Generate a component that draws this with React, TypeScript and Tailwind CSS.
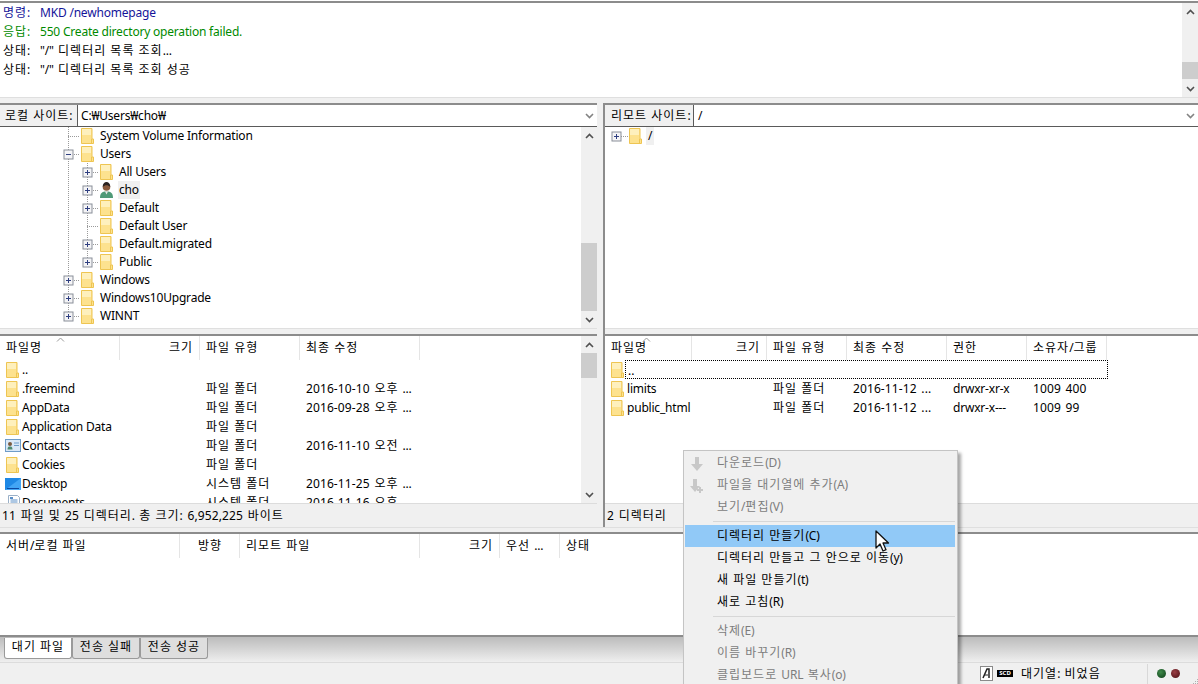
import React from "react";

/* Korean runs are set wider than Latin runs, as in the Windows original. */
const runClass = (part: string, whole: string) => {
  if (/[가-힣]/.test(part)) return "tracking-[1px]";
  if (/^[\d\s.,:-]+$/.test(part) && /\d/.test(part)) return "tracking-[0.1px] [word-spacing:1.5px]";
  if (/[가-힣]/.test(whole)) return "tracking-[-0.2px] [word-spacing:1.5px]";
  return "tracking-[-0.2px]";
};

const T = ({ children }: { children: string }) => (
  <>
    {children.split(/([가-힣][가-힣 ]*)/).map((part, i) =>
      part === "" ? null : (
        <span key={i} className={runClass(part, children)}>
          {part}
        </span>
      )
    )}
  </>
);

const Folder = ({ className = "" }: { className?: string }) => (
  <svg width="13" height="16" viewBox="0 0 13 16" className={"shrink-0 " + className}>
    <path d="M.5.5h10.500v10.500h1.500v4.500H.5z" fill="#fde28f" stroke="#eec552" />
    <rect x="1" y="1" width="9" height="6" fill="#fef0bd" />
    <path d="M10.500 11v4" stroke="#eec552" />
  </svg>
);

const Person = () => (
  <svg width="13" height="16" viewBox="0 0 13 16" className="shrink-0">
    <path d="M0 16c0-5 2-6.500 6.500-6.500S13 11 13 16z" fill="#4f9a78" />
    <circle cx="6.500" cy="5" r="3.800" fill="#8a5a3c" />
    <path d="M2.700 5c0-3.500 1.800-5 3.800-5s3.800 1.500 3.800 5C8 2.800 5 2.800 2.700 5z" fill="#2b2320" />
    <path d="M5 9.500l1.500 3 1.500-3z" fill="#e8e8e8" />
  </svg>
);

const Contacts = () => (
  <svg width="16" height="13" viewBox="0 0 16 13" className="shrink-0">
    <rect x=".5" y=".5" width="15" height="12" fill="#d9e8f7" stroke="#6f9cc8" />
    <circle cx="5" cy="5" r="2" fill="#7a5a40" />
    <path d="M2.500 10.500c0-2.500 1-3 2.500-3s2.500.5 2.500 3z" fill="#4f8a70" />
    <path d="M9 4h5M9 6.500h5" stroke="#6f9cc8" />
  </svg>
);

const Desktop = () => (
  <svg width="16" height="12" viewBox="0 0 16 12" className="shrink-0">
    <rect width="16" height="12" fill="#1e88e5" />
    <path d="M0 12L16 0v12z" fill="#42a5f5" />
    <path d="M2 10.500h12" stroke="#0d47a1" />
  </svg>
);

const Documents = () => (
  <svg width="14" height="16" viewBox="0 0 14 16" className="shrink-0">
    <path d="M2.500.5h9l2 2v13h-11z" fill="#fff" stroke="#9ab0c8" />
    <path d="M4.500 5h7M4.500 7h7M4.500 9h7" stroke="#5b8fc7" />
    <rect x="4" y="2" width="3" height="2" fill="#5b8fc7" />
  </svg>
);

const Chevron = ({ up = false, className = "" }: { up?: boolean; className?: string }) => (
  <svg width="9" height="6" viewBox="0 0 9 6" className={className}>
    <path d={up ? "M1 5l3.500-3.500L8 5" : "M1 1l3.500 3.500L8 1"} fill="none" stroke="#505050" strokeWidth="1.600" />
  </svg>
);

const Scrollbar = ({ top, size }: { top: number; size: number }) => (
  <div className="w-[16px] shrink-0 bg-[#f0f0f0] flex flex-col h-full">
    <div className="h-[17px] shrink-0 flex items-center justify-center">
      <Chevron up />
    </div>
    <div className="flex-1 min-h-0 relative">
      <div className="absolute left-0 right-0 bg-[#cdcdcd]" style={{ top, height: size }} />
    </div>
    <div className="h-[17px] shrink-0 flex items-center justify-center">
      <Chevron />
    </div>
  </div>
);

const Box = ({ x, minus = false }: { x: number; minus?: boolean }) => (
  <g>
    <rect x={x - 4} y="5" width="9" height="9" fill="#f4f4f6" stroke="#8a8f99" />
    <path d={`M${x - 2} 9.500h5`} stroke="#2f3f80" />
    {!minus && <path d={`M${x + 0.5} 7v5`} stroke="#2f3f80" />}
  </g>
);

type TreeRow = {
  name: string;
  depth: 1 | 2;
  box?: boolean;
  minus?: boolean;
  last1?: boolean;
  last2?: boolean;
  person?: boolean;
  selected?: boolean;
};

const treeRows: TreeRow[] = [
  { name: "System Volume Information", depth: 1 },
  { name: "Users", depth: 1, box: true, minus: true },
  { name: "All Users", depth: 2, box: true },
  { name: "cho", depth: 2, box: true, person: true, selected: true },
  { name: "Default", depth: 2, box: true },
  { name: "Default User", depth: 2 },
  { name: "Default.migrated", depth: 2, box: true },
  { name: "Public", depth: 2, box: true, last2: true },
  { name: "Windows", depth: 1, box: true },
  { name: "Windows10Upgrade", depth: 1, box: true },
  { name: "WINNT", depth: 1, box: true, last1: true },
];

const dots = { stroke: "#9a9a9a", strokeDasharray: "1 1" };

const TreeLine = ({ r }: { r: TreeRow }) => {
  const w = r.depth === 1 ? 81 : 100;
  const bx = r.depth === 1 ? 68 : 87;
  return (
    <svg width={w} height="18" viewBox={`0 0 ${w} 18`} className="shrink-0">
      <path d={`M68.500 0V${r.last1 ? 9 : 18}`} {...dots} />
      {r.depth === 2 && <path d={`M87.500 0V${r.last2 ? 9 : 18}`} {...dots} />}
      <path d={`M${bx} 9.500H${bx + 11}`} {...dots} />
      {r.box && <Box x={bx} minus={r.minus} />}
    </svg>
  );
};

const Tree = () => (
  <div className="flex-1 min-w-0 overflow-hidden">
    {treeRows.map((r) => (
      <div key={r.name} className="h-[18px] flex items-center">
        <TreeLine r={r} />
        {r.person ? <Person /> : <Folder />}
        <span className={"ml-[5px] px-[1px] h-[18px] leading-[17px] " + (r.selected ? "bg-[#f0f0f0]" : "")}>
          <T>{r.name}</T>
        </span>
      </div>
    ))}
  </div>
);

const Bar = () => <div className="h-[2px] shrink-0 bg-[#8c8c8c]" />;

const PathBar = ({ label, value, labelW, valueP }: { label: string; value: string; labelW: string; valueP: string }) => (
  <div className="h-[22px] shrink-0 flex bg-white border-b border-[#5a5a5a]">
    <div className={"h-full bg-[#f0f0f0] border-r border-[#5a5a5a] leading-[21px] shrink-0 " + labelW}>
      <T>{label}</T>
    </div>
    <div className={"flex-1 leading-[21px] " + valueP}>
      <T>{value}</T>
    </div>
    <div className="w-[16px] flex items-center justify-center">
      <Chevron className="opacity-70" />
    </div>
  </div>
);

const Band = () => <div className="h-[6px] shrink-0 bg-[#f0f0f0] border-t border-[#dfdfdf]" />;

const Header = ({ cols }: { cols: { t: string; w: string; right?: boolean }[] }) => (
  <div className="h-[24px] shrink-0 flex bg-white">
    {cols.map((c) => (
      <div
        key={c.t}
        className={"h-[24px] border-r border-[#e5e5e5] leading-[23px] shrink-0 px-[6px] " + c.w + (c.right ? " text-right" : "")}
      >
        <T>{c.t}</T>
      </div>
    ))}
  </div>
);

const SortMark = ({ className }: { className: string }) => (
  <svg width="9" height="5" viewBox="0 0 9 5" className={"absolute top-[1px] " + className}>
    <path d="M1 4.500l3.500-3.500L8 4.500" fill="none" stroke="#9a9a9a" />
  </svg>
);

const leftFiles: { n: string; t?: string; d?: string; icon?: React.ReactNode }[] = [
  { n: ".." },
  { n: ".freemind", t: "파일 폴더", d: "2016-10-10 오후 ..." },
  { n: "AppData", t: "파일 폴더", d: "2016-09-28 오후 ..." },
  { n: "Application Data", t: "파일 폴더" },
  { n: "Contacts", t: "파일 폴더", d: "2016-11-10 오전 ...", icon: <Contacts /> },
  { n: "Cookies", t: "파일 폴더" },
  { n: "Desktop", t: "시스템 폴더", d: "2016-11-25 오후 ...", icon: <Desktop /> },
  { n: "Documents", t: "시스템 폴더", d: "2016-11-16 오후 ...", icon: <Documents /> },
];

const rightFiles = [
  { n: "limits", t: "파일 폴더", d: "2016-11-12 ...", p: "drwxr-xr-x", o: "1009 400" },
  { n: "public_html", t: "파일 폴더", d: "2016-11-12 ...", p: "drwxr-x---", o: "1009 99" },
];

const MenuItem = ({ t, disabled, active }: { t: string; disabled?: boolean; active?: boolean }) => (
  <div
    className={
      "h-[22px] shrink-0 pl-[32px] leading-[21px] " +
      (disabled ? "text-[#7d7d7d] " : "text-black ") +
      (active ? "bg-[#91c9f7]" : "")
    }
  >
    <T>{t}</T>
  </div>
);

const MenuSep = () => <div className="h-[1px] my-[3px] ml-[28px] bg-[#d7d7d7] shrink-0" />;

export default function App() {
  return (
    <div className="relative w-[1198px] h-[684px] overflow-hidden bg-[#f0f0f0] text-[12px] text-black whitespace-nowrap font-['Noto_Sans','Noto_Sans_CJK_KR',sans-serif] flex flex-col">
      <div className="h-[1px] shrink-0 bg-white" />
      <Bar />
      {/* message log */}
      <div className="h-[94px] shrink-0 flex bg-white">
        <div className="flex-1 pl-[3px] pt-[1px]">
          {[
            ["명령:", "MKD /newhomepage", "text-[#14149a]"],
            ["응답:", "550 Create directory operation failed.", "text-[#008a00]"],
            ["상태:", "\"/\" 디렉터리 목록 조회...", "text-black"],
            ["상태:", "\"/\" 디렉터리 목록 조회 성공", "text-black"],
          ].map(([a, b, c], i) => (
            <div key={i} className={"h-[19px] leading-[18px] flex " + c}>
              <span className="w-[37px] shrink-0">
                <T>{a}</T>
              </span>
              <span>
                <T>{b}</T>
              </span>
            </div>
          ))}
        </div>
        <Scrollbar top={42} size={17} />
      </div>
      <Band />

      {/* site panes */}
      <div className="h-[424px] shrink-0 flex">
        <div className="w-[597px] shrink-0 flex flex-col">
          <Bar />
          <PathBar label="로컬 사이트:" value="C:₩Users₩cho₩" labelW="w-[78px] pl-[5px]" valueP="pl-[3px]" />
          <div className="h-[201px] shrink-0 flex bg-white">
            <Tree />
            <Scrollbar top={99} size={68} />
          </div>
          <Band />
          <Bar />
          <div className="h-[167px] shrink-0 flex bg-white relative">
            <div className="flex-1 min-w-0 flex flex-col overflow-hidden">
              <Header
                cols={[
                  { t: "파일명", w: "w-[120px]" },
                  { t: "크기", w: "w-[80px]", right: true },
                  { t: "파일 유형", w: "w-[100px]" },
                  { t: "최종 수정", w: "w-[120px]" },
                ]}
              />
              <SortMark className="left-[56px]" />
              <div className="overflow-hidden">
                {leftFiles.map((f) => (
                  <div key={f.n} className="h-[19px] flex items-center">
                    <div className="w-[22px] shrink-0 flex justify-center pl-[3px]">{f.icon ?? <Folder />}</div>
                    <div className="w-[184px] shrink-0">
                      <T>{f.n}</T>
                    </div>
                    <div className="w-[100px] shrink-0">
                      <T>{f.t ?? ""}</T>
                    </div>
                    <div>
                      <T>{f.d ?? ""}</T>
                    </div>
                  </div>
                ))}
              </div>
            </div>
            <Scrollbar top={0} size={25} />
          </div>
          <div className="h-[24px] shrink-0 leading-[23px] pl-[2px] bg-[#f0f0f0] border-t border-[#dcdcdc]">
            <T>11 파일 및 25 디렉터리. 총 크기: 6,952,225 바이트</T>
          </div>
        </div>

        <div className="w-[8px] shrink-0 bg-[#f0f0f0] border-r-2 border-[#8c8c8c]" />

        <div className="flex-1 min-w-0 flex flex-col">
          <Bar />
          <PathBar label="리모트 사이트:" value="/" labelW="w-[89px] pl-[6px]" valueP="pl-[4px]" />
          <div className="h-[201px] shrink-0 bg-white">
            <div className="h-[18px] flex items-center pl-[6px]">
              <svg width="18" height="18" viewBox="0 0 18 18" className="shrink-0">
                <path d="M6 9.500H17" {...dots} />
                <Box x={5} />
              </svg>
              <Folder />
              <span className="ml-[4px] px-[2px] h-[18px] leading-[17px] bg-[#f0f0f0]">/</span>
            </div>
          </div>
          <Band />
          <Bar />
          <div className="h-[167px] shrink-0 bg-white relative overflow-hidden">
            <Header
              cols={[
                { t: "파일명", w: "w-[87px]" },
                { t: "크기", w: "w-[75px]", right: true },
                { t: "파일 유형", w: "w-[80px]" },
                { t: "최종 수정", w: "w-[100px]" },
                { t: "권한", w: "w-[80px]" },
                { t: "소유자/그룹", w: "w-[80px]" },
              ]}
            />
            <SortMark className="left-[37px]" />
            <div className="h-[19px] flex items-center pl-[6px]">
              <Folder />
              <div className="ml-[1px] w-[483px] h-[19px] border border-dotted border-black leading-[19px] pl-[2px]">..</div>
            </div>
            {rightFiles.map((f) => (
              <div key={f.n} className="h-[19px] flex items-center pl-[6px]">
                <Folder />
                <div className="ml-[3px] w-[146px] shrink-0">
                  <T>{f.n}</T>
                </div>
                <div className="w-[80px] shrink-0">
                  <T>{f.t}</T>
                </div>
                <div className="w-[100px] shrink-0">
                  <T>{f.d}</T>
                </div>
                <div className="w-[80px] shrink-0">
                  <T>{f.p}</T>
                </div>
                <div>
                  <T>{f.o}</T>
                </div>
              </div>
            ))}
          </div>
          <div className="h-[24px] shrink-0 leading-[23px] pl-[2px] bg-[#f0f0f0] border-t border-[#dcdcdc]">
            <T>2 디렉터리</T>
          </div>
        </div>
      </div>

      <div className="h-[5px] shrink-0 bg-[#f0f0f0] border-t border-[#dfdfdf]" />
      <Bar />
      {/* queue */}
      <div className="h-[101px] shrink-0 bg-white">
        <Header
          cols={[
            { t: "서버/로컬 파일", w: "w-[180px]" },
            { t: "방향", w: "w-[60px] pl-[18px]" },
            { t: "리모트 파일", w: "w-[180px]" },
            { t: "크기", w: "w-[80px]", right: true },
            { t: "우선 ...", w: "w-[60px]" },
            { t: "상태", w: "w-[120px] !border-r-0" },
          ]}
        />
      </div>
      <Bar />
      {/* tabs */}
      <div className="h-[26px] shrink-0 flex pl-[4px] pt-[1px] items-start bg-gradient-to-b from-[#bcbcbc] to-[#efefef] border-b border-[#dcdcdc]">
        <div className="w-[68px] h-[21px] bg-white border border-t-0 border-[#9a9a9a] rounded-b-[3px] text-center leading-[18px]">
          <T>대기 파일</T>
        </div>
        <div className="w-[68px] h-[21px] bg-[#dedede] border border-t-0 border-[#9a9a9a] rounded-b-[3px] text-center leading-[18px]">
          <T>전송 실패</T>
        </div>
        <div className="w-[68px] h-[21px] bg-[#dedede] border border-t-0 border-[#9a9a9a] rounded-b-[3px] text-center leading-[18px]">
          <T>전송 성공</T>
        </div>
      </div>
      {/* status bar */}
      <div className="flex-1 min-h-0 flex items-center justify-end bg-[#f0f0f0] relative">
        <svg width="13" height="15" viewBox="0 0 13 15" className="shrink-0 mr-[4px]">
          <rect x=".5" y=".5" width="12" height="14" fill="#fff" stroke="#8a8a8a" />
          <path d="M3 12L7 3h2v9" fill="none" stroke="#222" strokeWidth="1.500" />
          <path d="M4 9h4" stroke="#222" />
        </svg>
        <span className="w-[16px] h-[7px] bg-black text-white text-[6px] leading-[7px] text-center shrink-0 font-bold">SCD</span>
        <span className="ml-[8px] w-[126px] shrink-0">
          <T>대기열: 비었음</T>
        </span>
        <div className="h-[20px] w-[1px] bg-[#d8d8d8] shrink-0" />
        <div className="w-[9px] h-[9px] rounded-full bg-[radial-gradient(circle_at_40%_35%,#3f8a4a,#0d3d17)] ml-[9px] shrink-0" />
        <div className="w-[9px] h-[9px] rounded-full bg-[radial-gradient(circle_at_40%_35%,#9a3f45,#4a0d12)] ml-[5px] mr-[18px] shrink-0" />
        <svg width="7" height="5" viewBox="0 0 7 5" className="absolute right-0 bottom-0">
          <path d="M6 0h1v1H6zM4 2h1v1H4zM6 2h1v1H6zM2 4h1v1H2zM4 4h1v1H4zM6 4h1v1H6z" fill="#b0b0b0" />
        </svg>
      </div>

      {/* context menu */}
      <div className="absolute left-[683px] top-[450px] w-[275px] h-[240px] bg-[#f0f0f0] border border-[#c4c4c4] shadow-[3px_3px_3px_rgba(0,0,0,0.35)] pl-[1px] pr-[2px] pt-[1px] flex flex-col">
        <MenuItem t="다운로드(D)" disabled />
        <MenuItem t="파일을 대기열에 추가(A)" disabled />
        <MenuItem t="보기/편집(V)" disabled />
        <MenuSep />
        <MenuItem t="디렉터리 만들기(C)" active />
        <MenuItem t="디렉터리 만들고 그 안으로 이동(y)" />
        <MenuItem t="새 파일 만들기(t)" />
        <MenuItem t="새로 고침(R)" />
        <MenuSep />
        <MenuItem t="삭제(E)" disabled />
        <MenuItem t="이름 바꾸기(R)" disabled />
        <MenuItem t="클립보드로 URL 복사(o)" disabled />
      </div>
      <svg width="14" height="16" viewBox="0 0 14 16" className="absolute left-[690px] top-[456px]">
        <path d="M5 1h4v7h4l-6 7-6-7h4z" fill="#c8c8c8" />
      </svg>
      <svg width="16" height="16" viewBox="0 0 16 16" className="absolute left-[689px] top-[478px]">
        <path d="M4 1h4v7h3l-5 6-5-6h3z" fill="#c8c8c8" />
        <path d="M10 9h2v2h2v2h-2v2h-2v-2H8v-2h2z" fill="#c8c8c8" />
      </svg>
      {/* mouse pointer */}
      <svg width="16" height="24" viewBox="0 0 16 24" className="absolute left-[874px] top-[530px]">
        <path d="M2 1v17l4-4 3 7 3-1.300-3-6.700h5.500z" fill="#fff" stroke="#111" strokeWidth="1.300" strokeLinejoin="round" />
      </svg>
    </div>
  );
}
